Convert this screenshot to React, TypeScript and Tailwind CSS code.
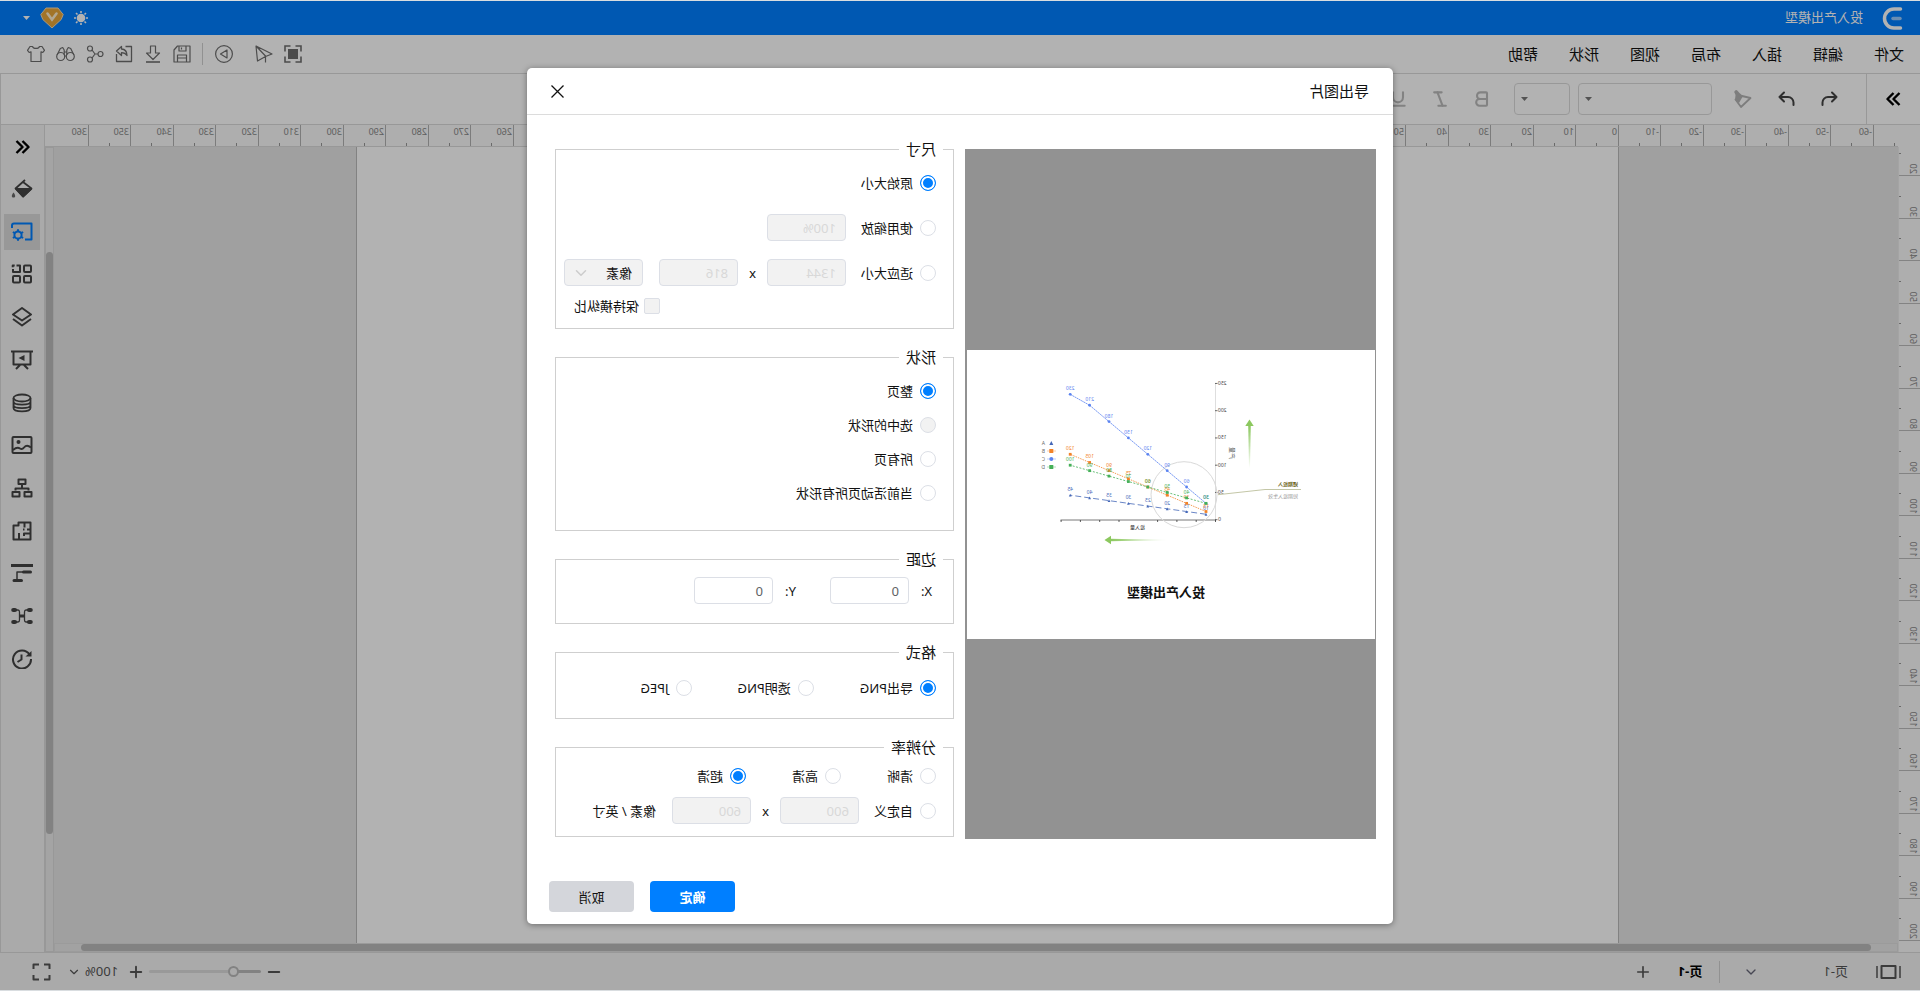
import type { ReactNode } from "react"
import { Bold, ChevronDown, Italic, Plus, Minus, Underline } from "lucide-react"

const menus = ["文件", "编辑", "插入", "布局", "视图", "形状", "帮助"]

/* ---------- icons ---------- */

function Icon({ w = 20, h = 20, sw = 1, title, children }: { w?: number; h?: number; sw?: number; title?: string; children: ReactNode }) {
    return (
        <svg
            width={w}
            height={h}
            viewBox={`0 0 ${w} ${h}`}
            fill="none"
            stroke="currentColor"
            strokeWidth={sw}
            strokeLinejoin="round"
            aria-label={title}
            className="shrink-0"
        >
            {children}
        </svg>
    )
}

const quickTools = [
    {
        name: "适应窗口",
        icon: (
            <Icon w={18} h={18} sw={1.6}>
                <path d="M1 6.500V1h5.500M11.500 1H17v5.500M17 11.500V17h-5.500M6.500 17H1v-5.500" strokeLinejoin="miter" />
                <rect x="4" y="4" width="10" height="10" fill="currentColor" stroke="none" />
            </Icon>
        )
    },
    {
        name: "发送",
        icon: (
            <Icon w={18} h={18} sw={1.2}>
                <path d="M17 1 1 9l6.500 2.500L15.500 16 17 1ZM17 1 7.500 11v6.500" />
            </Icon>
        )
    }
]

const fileTools = [
    {
        name: "保存",
        icon: (
            <Icon w={18} h={18} sw={1.2}>
                <path d="M1 1h12.500L17 5v12H1V1ZM5 1v5h7V1M9.500 2.500v2M4.500 17v-7h9v7M5 13h8" />
            </Icon>
        )
    },
    {
        name: "下载",
        icon: (
            <Icon w={18} h={18} sw={1.2}>
                <path d="M6.500 1h5v7h4L9 14.500 2.500 8h4V1Z" />
                <path d="M2 17h14" strokeWidth="1.600" />
            </Icon>
        )
    },
    {
        name: "导出",
        icon: (
            <Icon w={18} h={18} sw={1.3}>
                <path d="M7.500 1.500H1.500v15h15V9M16.500 6 11.500 1.500V4C8.500 4.200 6 6.500 6 10.500c1.300-2 3-2.800 5.500-2.800V10.500L16.500 6Z" />
            </Icon>
        )
    },
    {
        name: "分享",
        icon: (
            <Icon w={18} h={18} sw={1.2}>
                <circle cx="3.500" cy="9" r="2.500" />
                <circle cx="14" cy="3.500" r="2.500" />
                <circle cx="14" cy="14.500" r="2.500" />
                <path d="M6 9h3l3-4M9 9l3 4" />
            </Icon>
        )
    },
    {
        name: "查找",
        icon: (
            <Icon w={19} h={18} sw={1.2}>
                <circle cx="4.700" cy="11.500" r="4" />
                <circle cx="14.300" cy="11.500" r="4" />
                <path d="M1.100 10 4.300 3.500 6.700 2.500 8.200 5v5M17.900 10l-3.200-6.500-2.400-1L10.800 5v5M8.200 7h2.600M8.500 11h2" />
            </Icon>
        )
    },
    {
        name: "主题",
        icon: (
            <Icon w={18} h={18} sw={1.2}>
                <path d="M5.500 1.500c.8 2.600 6.200 2.600 7 0H15l2.500 3.800-1.700 2.200-1.800-.7V16.500H4V6.800l-1.800.7L.5 5.300 3 1.500h2.500Z" />
            </Icon>
        )
    }
]

const panelTools = [
    {
        name: "填充",
        icon: (
            <Icon w={22} h={20} sw={1.8}>
                <path d="M8 1 17.500 9.500 10 17.500 1.500 9.500 10 3" />
                <path d="M2 10h15l-7 7.500Z" fill="currentColor" />
                <path d="M19.500 13.500c2.600 3 1.800 5 0 5s-2.600-2 0-5Z" fill="currentColor" stroke="none" opacity=".8" />
            </Icon>
        )
    },
    {
        name: "图形设置",
        icon: (
            <Icon w={22} h={20} sw={2}>
                <path d="M21 6V3.500a2 2 0 0 0-2-2H1.500v16H8" />
                <circle cx="15" cy="13" r="3.600" />
                <path d="M15 7.200v2.300M15 16.500v2.300M9.900 10l2 1.200M18.100 14.800l2 1.200M9.900 16l2-1.200M18.100 11.200l2-1.200" />
            </Icon>
        )
    },
    {
        name: "图形库",
        icon: (
            <Icon w={22} h={20} sw={2}>
                <rect x="2" y="1.500" width="7" height="6.500" rx="1" />
                <rect x="2" y="12" width="7" height="6.500" rx="1" />
                <rect x="13" y="12" width="7" height="6.500" rx="1" />
                <path d="M16.500 1.500H13V8h7V5M18.300 1.500h2v1.700" />
            </Icon>
        )
    },
    {
        name: "图层",
        icon: (
            <Icon w={22} h={20} sw={2}>
                <path d="M11 1 20 7.500 11 13.500 2 7.500 11 1Z" />
                <path d="M2 12l9 6.500 9-6.500" />
            </Icon>
        )
    },
    {
        name: "演示",
        icon: (
            <Icon w={22} h={20} sw={2}>
                <path d="M0 1.500h22M2.500 1.500V14.500h17V1.500M9 15l-4 4M13 15l4 4" />
                <path d="M8.500 5v6l6-3Z" fill="currentColor" stroke="none" />
            </Icon>
        )
    },
    {
        name: "数据",
        icon: (
            <Icon w={22} h={20} sw={1.8}>
                <ellipse cx="11" cy="5" rx="8.500" ry="3.500" />
                <path d="M2.500 5v10c0 4.500 17 4.500 17 0V5M2.500 8.500c0 4.200 17 4.200 17 0M2.500 12c0 4.200 17 4.200 17 0" />
            </Icon>
        )
    },
    {
        name: "图片",
        icon: (
            <Icon w={22} h={20} sw={2}>
                <rect x="1.500" y="2" width="19" height="16" rx="1" />
                <circle cx="14.500" cy="7" r="2" fill="currentColor" stroke="none" />
                <path d="M2 12.500c3-2.500 5-2.500 7 0 1.500 2 2.500 2 4 1 2-1.300 4-1 7 1.500" />
            </Icon>
        )
    },
    {
        name: "组织架构",
        icon: (
            <Icon w={22} h={20} sw={2}>
                <rect x="7.500" y="1.500" width="7" height="4.500" />
                <rect x="1.500" y="14" width="7" height="4.500" />
                <rect x="13.500" y="14" width="7" height="4.500" />
                <path d="M11 6v4M4.500 12.500V10.500h13v2" />
            </Icon>
        )
    },
    {
        name: "平面图",
        icon: (
            <Icon w={22} h={20} sw={2}>
                <path d="M2.500 1.500h12V4.500h5v14h-17V1.500ZM8.500 1.500V6.500M2.500 8.500H6M10 8.500h-1.500M2.500 12.500H9v2.500M14 7.500v0M9 8.500h1M14 18.500V12" />
            </Icon>
        )
    },
    {
        name: "甘特图",
        icon: (
            <Icon w={22} h={20} sw={1.5}>
                <path d="M0 2.500h22" strokeWidth="3" />
                <path d="M2.500 9h7M11.500 17.500h7.500" strokeWidth="3" strokeLinecap="round" />
                <path d="M10 9h6v7.500" />
            </Icon>
        )
    },
    {
        name: "思维导图",
        icon: (
            <Icon w={22} h={20} sw={1.3}>
                <path d="M2.300 4h1.700M2.300 16h1.700M18 4h1.700M18 16h1.700" strokeWidth="4.200" strokeLinecap="round" />
                <path d="M5 4h2c1.500 0 1.500 1 1.500 2v8c0 1 0 2-1.500 2H5M17 4h-2c-1.500 0-1.500 1-1.500 2v8c0 1 0 2 1.500 2h2" />
                <path d="M8 10h6" strokeWidth="3" />
            </Icon>
        )
    },
    {
        name: "历史记录",
        icon: (
            <Icon w={22} h={20} sw={2}>
                <path d="M3.500 5.500A9 9 0 1 1 2 10" />
                <path d="M1.500 2v5.500h6Z" fill="currentColor" stroke="none" />
                <path d="M11.500 5.500v5l4 2.500" />
            </Icon>
        )
    }
]

function Caret({ className }: { className: string }) {
    return (
        <svg width="7" height="4" viewBox="0 0 7 4" fill="currentColor" className={className}>
            <path d="M0 0h7L3.500 4Z" />
        </svg>
    )
}

/* ---------- rulers ---------- */

const UNIT = 42.5

function TopRuler() {
    const ticks = Array.from({ length: 43 }, (_, i) => i - 6)
    return (
        <svg className="h-[22px] min-w-0 flex-1" fill="#888" fontFamily="Noto Sans, sans-serif" fontSize="9">
            {ticks.map((t) => {
                const x = Math.round(279 + t * UNIT)
                return (
                    <g key={t}>
                        <rect x={x} y="0" width="1" height="21" fill="#b2b2b2" />
                        <rect x={x - 21} y="18" width="1" height="3" fill="#999" />
                        <text x={x + 2} y="10">{t * 10}</text>
                    </g>
                )
            })}
            <rect x="0" y="21" width="100%" height="1" fill="#dadada" />
        </svg>
    )
}

function SideRuler() {
    const ticks = Array.from({ length: 19 }, (_, i) => i)
    return (
        <svg className="h-full w-[22px] shrink-0 bg-[#f9f9f9]" fill="#888" fontFamily="Noto Sans, sans-serif" fontSize="9">
            {ticks.map((t) => {
                const y = Math.round(28 + t * UNIT)
                return (
                    <g key={t}>
                        <rect x="0" y={y} width="21" height="1" fill="#bcbcbc" />
                        <rect x="19" y={y - 22} width="2" height="1" fill="#999" />
                        <text transform={`translate(10 ${y - 1}) rotate(-90)`}>{t * 10 + 20}</text>
                    </g>
                )
            })}
            <rect x="21" y="0" width="1" height="100%" fill="#ebebeb" />
        </svg>
    )
}

/* ---------- preview chart ---------- */

const series = [
    { key: "A", color: "#4467b8", dash: "6 3", values: [10, 15, 20, 25, 30, 35, 40, 45] },
    { key: "B", color: "#f28328", dash: "1.5 1", values: [15, 30, 45, 60, 75, 90, 105, 120] },
    { key: "C", color: "#5b83f0", dash: "2 .5", values: [30, 60, 90, 120, 150, 180, 210, 230] },
    { key: "D", color: "#45b058", dash: "2 1.5", values: [30, 40, 50, 60, 70, 80, 90, 100] }
]

const px = (i: number) => 169 + i * 19.4
const py = (v: number) => 169.7 - v * 0.545

function Marker({ type, x, y, color, r }: { type: string; x: number; y: number; color: string; r: number }) {
    if (type === "A") return <path d={`M${x} ${y - r}l${r} ${r * 2}h${-2 * r}Z`} fill={color} />
    if (type === "C") return <circle cx={x} cy={y} r={r} fill={color} />
    return <rect x={x - r} y={y - r} width={r * 2} height={r * 2} fill={color} />
}

function Chart() {
    return (
        <svg viewBox="0 0 408 289" className="block w-full bg-white" fontFamily="Noto Sans, Noto Sans CJK SC, sans-serif" fontSize="5" role="img" aria-label="投入产出模型">
            <defs>
                <linearGradient id="up" gradientUnits="userSpaceOnUse" x1="0" y1="118" x2="0" y2="76">
                    <stop offset="0" stopColor="#8cc85f" stopOpacity="0" />
                    <stop offset="1" stopColor="#8cc85f" />
                </linearGradient>
                <linearGradient id="right" gradientUnits="userSpaceOnUse" x1="205" y1="0" x2="264" y2="0">
                    <stop offset="0" stopColor="#8cc85f" stopOpacity="0" />
                    <stop offset="1" stopColor="#8cc85f" />
                </linearGradient>
            </defs>

            {/* axes */}
            <path d="M159.500 33V170" stroke="#c8c8c8" strokeWidth=".6" />
            <path d="M159 170H314.500" stroke="#555" strokeWidth=".8" />
            {[0, 1, 2, 3, 4, 5].map((n) => (
                <g key={n}>
                    <path d={`M157.500 ${py(n * 50)}h2.500`} stroke="#444" strokeWidth=".8" />
                    <text x="157" y={py(n * 50) + 1.5} textAnchor="end" fill="#444">{n * 50}</text>
                </g>
            ))}
            {[0, 1, 2, 3, 5, 6, 7, 8].map((n) => (
                <path key={n} d={`M${159.5 + n * 19.3} 170v2`} stroke="#333" strokeWidth=".8" />
            ))}
            <text x="230" y="179" fill="#222" fontSize="5">投入量</text>
            <text transform="translate(145 109) rotate(-90)" fill="#555" fontSize="6">产量</text>

            {/* focus area */}
            <circle cx="191" cy="144.700" r="33" fill="none" stroke="#d9d9d9" />
            <path d="M157 144.700 110 139.500H74" fill="none" stroke="#bcbf9c" strokeWidth=".9" />
            <text x="77" y="135.500" fill="#6b6420" fontSize="5" fontWeight="700">短期投入</text>
            <text x="77" y="148" fill="#999" fontSize="5">短期投入生效</text>

            {series.map((s) => (
                <g key={s.key}>
                    <polyline
                        points={s.values.map((v, i) => `${px(i)},${py(v)}`).join(" ")}
                        fill="none"
                        stroke={s.color}
                        strokeWidth=".8"
                        strokeDasharray={s.dash}
                    />
                    {s.values.map((v, i) => (
                        <g key={i}>
                            <Marker type={s.key} x={px(i)} y={py(v)} color={s.color} r={1.4} />
                            <text x={px(i)} y={py(v) - 4} textAnchor="middle" fill={s.color}>{v}</text>
                        </g>
                    ))}
                </g>
            ))}

            {/* legend */}
            {series.map((s, i) => (
                <g key={s.key}>
                    {s.key !== "A" && <path d={`M319 ${93 + i * 8}h9`} stroke={s.color} strokeWidth=".4" />}
                    <Marker type={s.key} x={323.7} y={93 + i * 8} color={s.color} r={2} />
                    <text x="330" y={94.5 + i * 8} fill="#666">{s.key}</text>
                </g>
            ))}

            {/* direction arrows */}
            <path d="M125 118l-.8-43h2.600l-.8 43Z" fill="url(#up)" />
            <path d="M125.500 69.500l4.200 6.500h-8.400Z" fill="#8cc85f" />
            <path d="M205 190l60-1.300v2.600Z" fill="url(#right)" />
            <path d="M270.500 190l-6.500 4.200v-8.400Z" fill="#8cc85f" />

            <text x="209" y="246.500" textAnchor="middle" fill="#111" fontSize="13" fontWeight="700">投入产出模型</text>
        </svg>
    )
}

/* ---------- form parts ---------- */

function Radio({ name, label, checked, disabled }: { name: string; label: string; checked?: boolean; disabled?: boolean }) {
    return (
        <label className="flex shrink-0 items-center gap-[7px]">
            <input
                type="radio"
                name={name}
                defaultChecked={checked}
                disabled={disabled}
                className="size-4 appearance-none rounded-full border border-[#dcdfe6] bg-white checked:border-[#007fff] checked:bg-[#007fff] checked:shadow-[inset_0_0_0_2px_white] disabled:bg-[#f2f2f2]"
            />
            {label}
        </label>
    )
}

function Field({ label, value, disabled }: { label: string; value: string; disabled?: boolean }) {
    return (
        <input
            type="text"
            aria-label={label}
            defaultValue={value}
            disabled={disabled}
            className="h-[27px] w-[79px] rounded border border-[#dcdfe6] bg-white px-[9px] text-[#606266] disabled:bg-[#f2f2f2] disabled:text-[#d8d8d8]"
        />
    )
}

function Group({ title, className, children }: { title: string; className: string; children: ReactNode }) {
    return (
        <fieldset className="border border-[#cfcfcf] px-[10px]">
            <legend className="px-[7px] text-[15px] leading-5">{title}</legend>
            <div className={`flex flex-col pl-[7px] ${className}`}>{children}</div>
        </fieldset>
    )
}

function ExportDialog() {
    return (
        <form role="dialog" aria-label="导出图片" className="w-[866px] rounded-[5px] bg-white text-[13px] leading-5 text-[#111] shadow-[0_1px_6px_rgba(0,0,0,0.4)]">
            <header className="flex h-[47px] items-center justify-between border-b border-[#dcdcdc] pl-6 pr-6">
                <h2 className="text-[15px]">导出图片</h2>
                <button type="button" aria-label="关闭">
                    <Icon w={13} h={13} sw={1.3}>
                        <path d="M.5.5l12 12M12.500.5l-12 12" />
                    </Icon>
                </button>
            </header>

            <div className="flex gap-[11px] pl-[17px] pr-[28px] pt-6">
                <div className="mt-[10px] flex flex-1 flex-col justify-center bg-[#929292] pl-px pr-[2px]">
                    <Chart />
                </div>

                <div className="flex w-[399px] flex-col gap-[18px] pb-[2px]">
                    <Group title="尺寸" className="pb-[14px] pt-[10px]">
                        <div className="flex h-[27px] items-center">
                            <Radio name="size" label="原始大小" checked />
                        </div>
                        <div className="mt-[18px] flex items-center gap-[15px]">
                            <Radio name="size" label="使用缩放" />
                            <Field label="缩放比例" value="100%" disabled />
                        </div>
                        <div className="mt-[18px] flex items-center">
                            <Radio name="size" label="适应大小" />
                            <div className="ml-[15px] flex items-center gap-[11px]">
                                <Field label="宽度" value="1344" disabled />
                                <span>x</span>
                                <Field label="高度" value="816" disabled />
                            </div>
                            <div className="relative ml-4">
                                <select disabled aria-label="单位" className="h-[27px] w-[79px] appearance-none rounded border border-[#dcdfe6] bg-[#f2f2f2] px-[10px] text-[#111] opacity-100">
                                    <option>像素</option>
                                </select>
                                <ChevronDown size={18} className="pointer-events-none absolute right-2 top-[5px] text-[#ccc]" />
                            </div>
                        </div>
                        <label className="mr-2 mt-3 flex h-4 items-center gap-[5px] self-end">
                            <input type="checkbox" disabled className="size-4 appearance-none rounded-[2px] border border-[#dcdfe6] bg-[#f2f2f2]" />
                            保持横纵比
                        </label>
                    </Group>

                    <Group title="形状" className="gap-[14px] pb-[27px] pt-[14px]">
                        <Radio name="shape" label="整页" checked />
                        <Radio name="shape" label="选中的形状" disabled />
                        <Radio name="shape" label="所有页" />
                        <Radio name="shape" label="当前活动页所有形状" />
                    </Group>

                    <Group title="边距" className="pb-[19px] pt-2">
                        <div className="flex items-center gap-[34px] pl-1">
                            <label className="flex items-center gap-3">
                                X:
                                <Field label="X" value="0" />
                            </label>
                            <label className="flex items-center gap-3">
                                Y:
                                <Field label="Y" value="0" />
                            </label>
                        </div>
                    </Group>

                    <Group title="格式" className="pb-5 pt-4">
                        <div className="flex gap-[46px]">
                            <Radio name="format" label="导出PNG" checked />
                            <Radio name="format" label="透明PNG" />
                            <Radio name="format" label="JPEG" />
                        </div>
                    </Group>

                    <Group title="分辨率" className="gap-[11px] pb-3 pt-[9px]">
                        <div className="flex gap-[46px]">
                            <Radio name="dpi" label="清晰" />
                            <Radio name="dpi" label="高清" />
                            <Radio name="dpi" label="超清" checked />
                        </div>
                        <div className="flex items-center">
                            <Radio name="dpi" label="自定义" />
                            <div className="ml-[15px] flex items-center gap-[11px]">
                                <Field label="水平分辨率" value="600" disabled />
                                <span>x</span>
                                <Field label="垂直分辨率" value="600" disabled />
                            </div>
                            <span className="ml-4">像素 / 英寸</span>
                        </div>
                    </Group>
                </div>
            </div>

            <footer className="mt-[42px] flex justify-end gap-4 pb-3 pr-[22px]">
                <button type="button" className="h-[31px] w-[85px] rounded bg-[#007fff] font-bold text-white">确定</button>
                <button type="button" className="h-[31px] w-[85px] rounded bg-[#d4d6db]">取消</button>
            </footer>
        </form>
    )
}

export default function App() {
    return (
        <div className="h-screen -scale-x-100 overflow-hidden bg-[#d9dde0] py-px font-['Noto_Sans','Noto_Sans_CJK_SC',sans-serif] text-[13px] text-[#111]">
            <div className="relative flex h-full flex-col bg-white">
                {/* Title bar */}
                <header className="flex h-[34px] shrink-0 items-center bg-[#007eff] pl-[17px] pr-[23px] text-white">
                    <svg width="21" height="23" viewBox="0 0 21 23" fill="none" stroke="currentColor" strokeLinecap="round" strokeWidth="3.500">
                        <path d="M2.500 2H9a9.500 9.500 0 0 1 0 19H2.500" />
                        <path d="M3 11.500h7" opacity=".6" />
                    </svg>
                    <h1 className="ml-[19px]">投入产出模型</h1>
                    <div className="ml-auto flex items-center gap-[10px]">
                        <Icon w={14} h={14} sw={1.6}>
                            <circle cx="7" cy="7" r="4.300" fill="currentColor" stroke="none" />
                            <path d="M7 0v2M7 12v2M0 7h2M12 7h2M2 2l1.500 1.500M10.500 10.500 12 12M12 2l-1.500 1.500M3.500 10.500 2 12" />
                        </Icon>
                        <svg width="24" height="22" viewBox="0 0 24 22" fill="none">
                            <path d="M6 1h12l5.200 6.500-2 5L12 21 2.800 12.500l-2-5Z" fill="#e8a63a" stroke="#f2dcb4" />
                            <path d="M7.500 6.500 12 12.500l4.500-6" stroke="#fff0d0" strokeWidth="2.600" strokeLinecap="round" />
                        </svg>
                        <Caret className="text-white" />
                    </div>
                </header>

                {/* Menu bar */}
                <nav className="flex h-[39px] shrink-0 items-center border-b border-[#dadada] pl-4 pr-[27px]">
                    <div className="flex gap-[31px] text-[15px]">
                        {menus.map((m) => (
                            <button key={m} type="button">{m}</button>
                        ))}
                    </div>
                    <div className="ml-auto flex items-center gap-[11px] text-[#6e6e6e]">
                        {quickTools.map((t) => (
                            <button key={t.name} type="button" aria-label={t.name}>{t.icon}</button>
                        ))}
                        <button type="button" aria-label="播放" className="ml-[10px]">
                            <Icon w={20} h={18} sw={1.2}>
                                <circle cx="10" cy="9" r="8.400" />
                                <path d="M7 5v8l6.500-4Z" />
                            </Icon>
                        </button>
                        <span className="h-[22px] w-px bg-[#d0d0d0]" />
                        {fileTools.map((t) => (
                            <button key={t.name} type="button" aria-label={t.name}>{t.icon}</button>
                        ))}
                    </div>
                </nav>

                {/* Format toolbar */}
                <div className="flex h-[51px] shrink-0 items-center border-b border-r border-[#dadada]">
                    <button type="button" aria-label="展开" className="flex h-full w-[54px] items-center justify-center border-r border-[#dadada] text-black">
                        <Icon w={15} h={14} sw={2.4}>
                            <path d="M1.500 1l6 6-6 6M7.500 1l6 6-6 6" />
                        </Icon>
                    </button>
                    <div className="flex items-center gap-[22px] pl-7">
                        <div className="flex items-center gap-[26px] text-[#444]">
                            <button type="button" aria-label="撤销">
                                <Icon w={17} h={16} sw={2}>
                                    <path d="M6 1.500 1.500 6 6 10.500M1.500 6H10a5.500 5.500 0 0 1 5.500 5.500V14" strokeLinecap="round" />
                                </Icon>
                            </button>
                            <button type="button" aria-label="重做">
                                <Icon w={17} h={16} sw={2}>
                                    <path d="M11 1.500 15.500 6 11 10.500M15.500 6H7a5.500 5.500 0 0 0-5.500 5.500V14" strokeLinecap="round" />
                                </Icon>
                            </button>
                            <button type="button" aria-label="格式刷" className="text-[#b4b4b4]">
                                <Icon w={18} h={18} sw={1.8}>
                                    <path d="M1.500 8 10 6l6.500 3.500-5.500 7.500Z" />
                                    <path d="M9 6 12.500 3 14.500.8a1.800 1.800 0 0 1 2.700 2.400L16.500 5l.5 5-4 3Z" fill="currentColor" stroke="none" />
                                </Icon>
                            </button>
                        </div>
                        <div className="flex gap-2">
                            <div className="relative">
                                <select aria-label="字体" className="block h-8 w-[134px] appearance-none rounded border border-[#dadada]" />
                                <Caret className="pointer-events-none absolute right-[7px] top-[14px] text-[#777]" />
                            </div>
                            <div className="relative">
                                <select aria-label="字号" className="block h-8 w-14 appearance-none rounded border border-[#dadada]" />
                                <Caret className="pointer-events-none absolute right-[7px] top-[14px] text-[#777]" />
                            </div>
                        </div>
                        <div className="flex gap-[22px] text-[#bbb]">
                            <button type="button" aria-label="加粗"><Bold size={20} strokeWidth={2.5} /></button>
                            <button type="button" aria-label="斜体"><Italic size={20} strokeWidth={2.5} /></button>
                            <button type="button" aria-label="下划线"><Underline size={20} strokeWidth={2.5} /></button>
                        </div>
                    </div>
                </div>

                {/* Workspace */}
                <div className="flex min-h-0 flex-1">
                    <div className="flex min-w-0 flex-1 flex-col">
                        <div className="flex shrink-0 bg-[#f9f9f9] pl-[22px]">
                            <TopRuler />
                        </div>
                        <div className="flex min-h-0 flex-1">
                            <SideRuler />
                            <div className="flex min-w-0 flex-1 flex-col">
                                <div className="flex min-h-0 flex-1 bg-[#e5e5e5]">
                                    <main className="ml-[279px] mr-[302px] flex-1 border-x border-[#bbb] bg-white" />
                                </div>
                                <div className="h-[9px] border border-[#dfdfdf] bg-[#e8e8e8] pl-[26px] pr-[26px]">
                                    <div className="h-full rounded bg-[#bababa]" />
                                </div>
                            </div>
                            <div className="flex w-[9px] flex-col border border-[#dadada] bg-[#ebebeb] pb-[117px] pt-[104px]">
                                <div className="flex-1 rounded bg-[#bababa]" />
                            </div>
                        </div>
                    </div>
                    <aside className="flex w-[45px] shrink-0 flex-col items-center border-x border-[#dadada] bg-[#f4f4f4] text-[#444]">
                        <button type="button" aria-label="收起" className="mt-[15px] text-black">
                            <Icon w={15} h={14} sw={2.4}>
                                <path d="M7.500 1l-6 6 6 6M13.500 1l-6 6 6 6" />
                            </Icon>
                        </button>
                        <div className="mt-[17px] flex h-[506px] flex-col justify-between">
                            {panelTools.map((t, i) => (
                                <button
                                    key={t.name}
                                    type="button"
                                    aria-label={t.name}
                                    className={`flex size-9 items-center justify-center ${i === 1 ? "bg-[#dadada] text-[#007eff]" : ""}`}
                                >
                                    {t.icon}
                                </button>
                            ))}
                        </div>
                    </aside>
                </div>

                {/* Status bar */}
                <footer className="flex h-[38px] shrink-0 items-center border-t border-[#dadada] bg-[#f4f4f4] pl-[19px] pr-8 text-[#555]">
                    <button type="button" aria-label="页面视图">
                        <Icon w={25} h={14} sw={2}>
                            <path d="M1 1v12M24 1v12" strokeWidth="1.500" />
                            <rect x="5.500" y="1" width="14" height="12" />
                        </Icon>
                    </button>
                    <button type="button" className="ml-7 flex items-center gap-[64px]">
                        页-1
                        <ChevronDown size={16} className="text-[#667]" />
                    </button>
                    <span className="ml-[23px] h-[22px] w-px bg-[#d0d0d0]" />
                    <button type="button" className="ml-[17px] font-bold text-black">页-1</button>
                    <button type="button" aria-label="添加页" className="ml-[26px]"><Plus size={18} strokeWidth={2.2} /></button>

                    <div className="ml-auto flex items-center">
                        <button type="button" aria-label="缩小"><Minus size={18} strokeWidth={2.5} /></button>
                        <input
                            type="range"
                            aria-label="缩放"
                            defaultValue={22}
                            className="ml-1 h-[3px] w-[112px] appearance-none rounded bg-[linear-gradient(to_right,#bbb_26%,#dcdcdc_26%)] [&::-webkit-slider-thumb]:size-[11px] [&::-webkit-slider-thumb]:appearance-none [&::-webkit-slider-thumb]:rounded-full [&::-webkit-slider-thumb]:border-2 [&::-webkit-slider-thumb]:border-[#bbb] [&::-webkit-slider-thumb]:bg-[#f4f4f4]"
                        />
                        <button type="button" aria-label="放大" className="ml-1"><Plus size={18} strokeWidth={2.5} /></button>
                        <button type="button" className="ml-[9px] flex items-center gap-1">
                            100%
                            <ChevronDown size={14} />
                        </button>
                        <button type="button" aria-label="全屏" className="ml-4">
                            <Icon w={19} h={18} sw={2}>
                                <path d="M1.500 6V1.500H7M12 1.500h5.500V6M17.500 12v4.500H12M7 16.500H1.500V12" />
                            </Icon>
                        </button>
                    </div>
                </footer>

                {/* Modal layer */}
                <div className="absolute inset-0 flex items-start justify-center bg-black/30 pt-[67px]">
                    <ExportDialog />
                </div>
            </div>
        </div>
    )
}
